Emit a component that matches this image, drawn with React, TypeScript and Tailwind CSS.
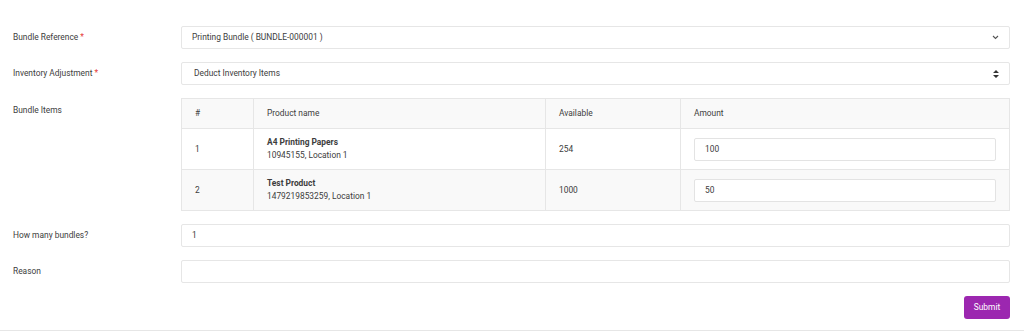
import React from "react";

const font = { fontFamily: "Roboto, 'Liberation Sans', sans-serif" };

const items = [
    { n: 1, name: "A4 Printing Papers", sub: "10945155, Location 1", available: "254", amount: "100" },
    { n: 2, name: "Test Product", sub: "1479219853259, Location 1", available: "1000", amount: "50" },
];

function Label({ text, required }: { text: string; required?: boolean }) {
    return (
        <div className="w-[168px] shrink-0 text-[8.4px] text-[#3d3d3d]">
            {text}
            {required && <span className="text-[#e53935]"> *</span>}
        </div>
    );
}

function ChevronDown() {
    return (
        <svg width="7" height="5" viewBox="0 0 7 5" className="text-[#555]">
            <path d="M1 1l2.5 2.5L6 1" fill="none" stroke="currentColor" strokeWidth="1.1" />
        </svg>
    );
}

function UpDown() {
    return (
        <svg width="6" height="8" viewBox="0 0 6 8" className="text-[#333]">
            <path d="M3 0L6 3H0z M3 8L0 5h6z" fill="currentColor" />
        </svg>
    );
}

export default function App() {
    return (
        <div className="w-[1024px] h-[333px] bg-white overflow-hidden" style={font}>
            <div className="h-[331px] border-b border-[#e6e6e6] pl-[13px] pr-[14px] pt-[26px] flex flex-col gap-[13px]">
                {/* Bundle reference */}
                <div className="flex items-center">
                    <Label text="Bundle Reference" required />
                    <div className="flex-1 h-[23px] border border-[#e6e6e6] rounded-[2px] flex items-center justify-between pl-[10px] pr-[10px] text-[8.4px] text-[#3d3d3d]">
                        <span>Printing Bundle ( BUNDLE-000001 )</span>
                        <ChevronDown />
                    </div>
                </div>

                {/* Inventory adjustment */}
                <div className="flex items-center">
                    <Label text="Inventory Adjustment" required />
                    <div className="flex-1 h-[23px] border border-[#e6e6e6] rounded-[2px] flex items-center justify-between pl-[12px] pr-[10px] text-[8.4px] text-[#3d3d3d]">
                        <span>Deduct Inventory Items</span>
                        <UpDown />
                    </div>
                </div>

                {/* Bundle items table */}
                <div className="flex items-start">
                    <div className="pt-[6px]">
                        <Label text="Bundle Items" />
                    </div>
                    <table className="flex-1 border-collapse border border-[#e6e6e6] text-[8.4px] text-[#3d3d3d]">
                        <thead>
                            <tr className="bg-[#f9f9f9] h-[30px]">
                                <th className="w-[72px] border border-[#e6e6e6] text-left font-normal pl-[13px]">#</th>
                                <th className="w-[292px] border border-[#e6e6e6] text-left font-normal pl-[13px]">Product name</th>
                                <th className="w-[135px] border border-[#e6e6e6] text-left font-normal pl-[13px]">Available</th>
                                <th className="border border-[#e6e6e6] text-left font-normal pl-[13px]">Amount</th>
                            </tr>
                        </thead>
                        <tbody>
                            {items.map((it, i) => (
                                <tr key={it.n} className={`h-[41px] ${i % 2 === 1 ? "bg-[#f9f9f9]" : "bg-white"}`}>
                                    <td className="border border-[#e6e6e6] pl-[13px]">{it.n}</td>
                                    <td className="border border-[#e6e6e6] pl-[13px] leading-[13px]">
                                        <div className="font-bold">{it.name}</div>
                                        <div>{it.sub}</div>
                                    </td>
                                    <td className="border border-[#e6e6e6] pl-[13px]">{it.available}</td>
                                    <td className="border border-[#e6e6e6] px-[13px]">
                                        <div className="h-[23px] bg-white border border-[#e3e3e3] rounded-[2px] flex items-center pl-[10px]">
                                            {it.amount}
                                        </div>
                                    </td>
                                </tr>
                            ))}
                        </tbody>
                    </table>
                </div>

                {/* How many */}
                <div className="flex items-center">
                    <Label text="How many bundles?" />
                    <div className="flex-1 h-[23px] border border-[#e6e6e6] rounded-[2px] flex items-center pl-[10px] text-[8.4px] text-[#3d3d3d]">
                        1
                    </div>
                </div>

                {/* Reason */}
                <div className="flex items-center">
                    <Label text="Reason" />
                    <div className="flex-1 h-[23px] border border-[#e6e6e6] rounded-[2px]" />
                </div>

                <div className="flex justify-end">
                    <button className="h-[23px] w-[46px] bg-[#9c27b0] text-white text-[8.4px] rounded-[3px]">
                        Submit
                    </button>
                </div>
            </div>
        </div>
    );
}
